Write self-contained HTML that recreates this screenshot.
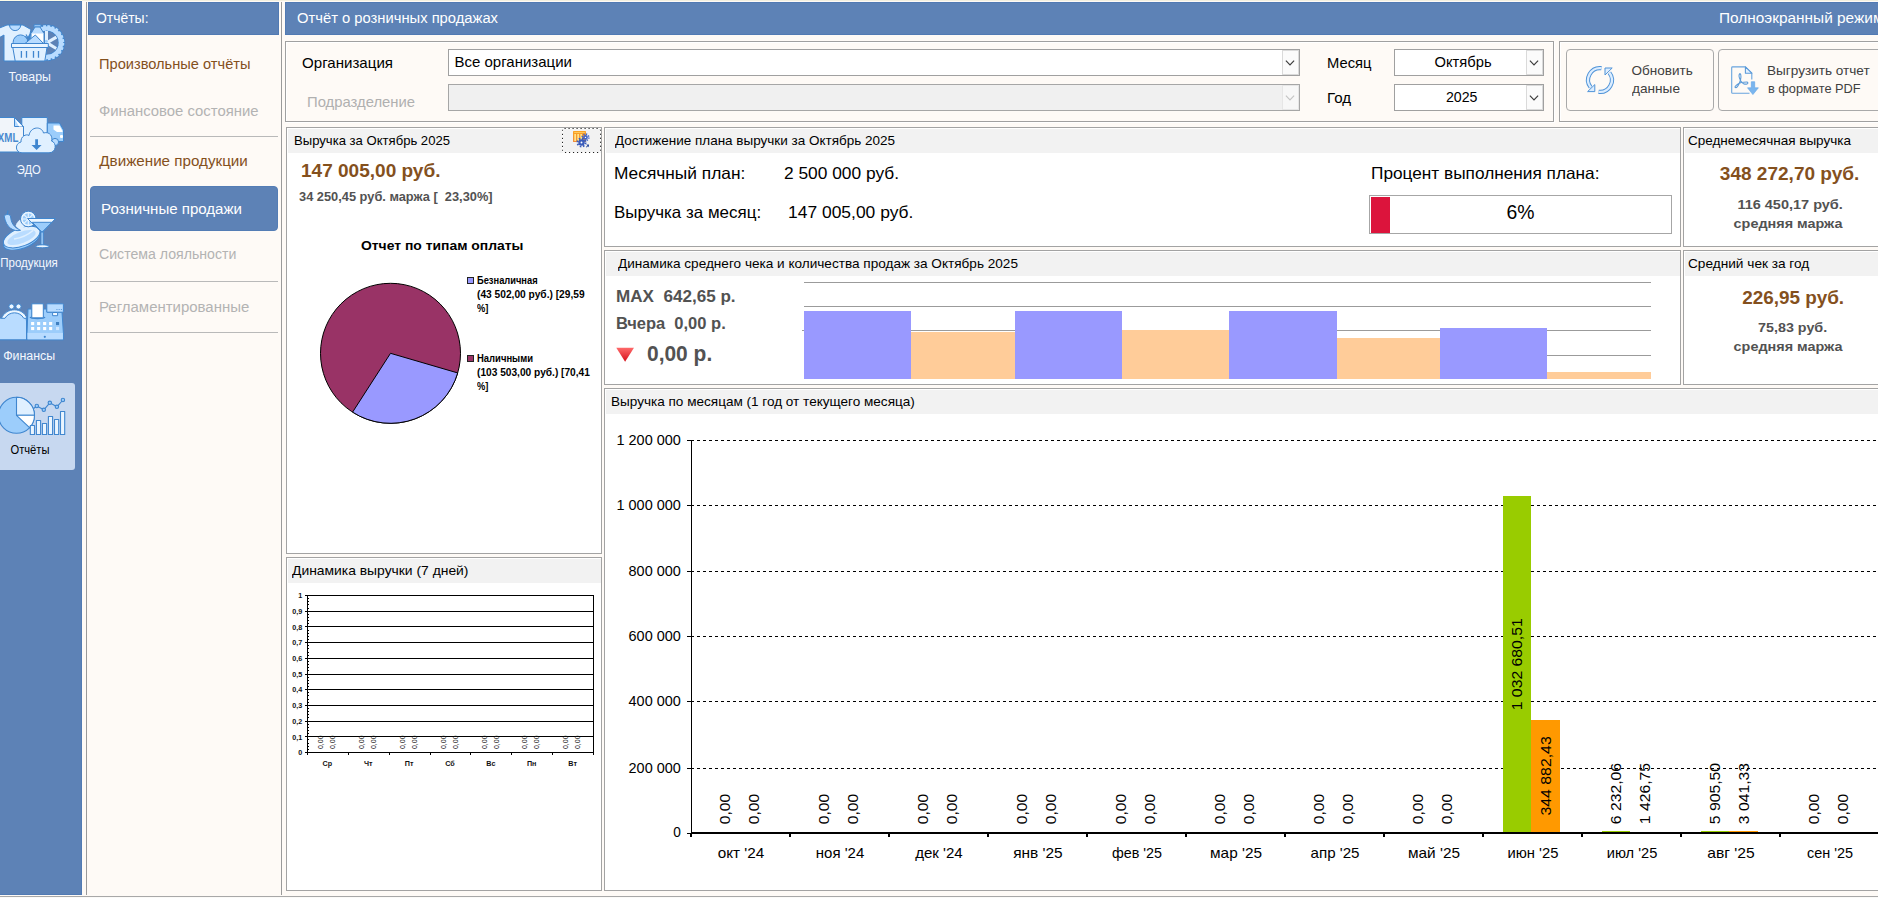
<!DOCTYPE html>
<html lang="ru"><head><meta charset="utf-8"><title>Отчёт о розничных продажах</title>
<style>
html,body{margin:0;padding:0;}
body{width:1878px;height:898px;overflow:hidden;background:#fefaf6;font-family:"Liberation Sans", sans-serif;position:relative;}
div,span,svg{position:absolute;box-sizing:border-box;}
.t{white-space:pre;line-height:normal;}
.panel{border:1px solid #a3a3a3;background:#fff;}
.band{background:#f2f2f2;}
.combo{border:1px solid #a0a0a0;background:#fff;}
.combo.dis{background:#f0f0f0;border-color:#a6a6a6;}
.ddb{border:1px solid #b9b9b9;background:#fff;}
.btn{border:1px solid #a9a9a9;border-radius:4px;background:#fefaf6;}
.hl{height:1px;background:#b4b4b4;}
</style></head><body>
<div style="left:0px;top:0px;width:1878px;height:1px;background:#f2efdf;"></div>
<div style="left:0px;top:0px;width:82px;height:1px;background:#fdfce8;"></div>
<div style="left:0px;top:896px;width:1878px;height:1px;background:#a8a8a8;"></div>
<div style="left:0px;top:897px;width:1878px;height:1px;background:#fbfaf8;"></div>
<div style="left:-1px;top:1px;width:83px;height:894px;background:#5d82b6;border:1px solid #517ab3;"></div>
<div style="left:0px;top:383px;width:75px;height:87px;background:#c7d8f0;border-radius:0 3px 3px 0;"></div>
<span class="t " style="left:9.06px;top:70.00px;font-size:12px;color:#f4f8ff;transform:scaleX(1.0271);transform-origin:50% 0;">Товары</span>
<span class="t " style="left:16.36px;top:163.00px;font-size:12px;color:#f4f8ff;transform:scaleX(0.9343);transform-origin:50% 0;">ЭДО</span>
<span class="t " style="left:-0.72px;top:256.00px;font-size:12px;color:#f4f8ff;transform:scaleX(0.9593);transform-origin:50% 0;">Продукция</span>
<span class="t " style="left:4.30px;top:349.00px;font-size:12px;color:#f4f8ff;transform:scaleX(1.0319);transform-origin:50% 0;">Финансы</span>
<span class="t " style="left:8.65px;top:443.00px;font-size:12px;color:#000;transform:scaleX(0.9310);transform-origin:50% 0;">Отчёты</span>
<svg style="left:0px;top:22px" width="68" height="42" viewBox="0 22 68 42" ><g stroke="#3f86cf" stroke-width="1" stroke-linejoin="round"><circle cx="46.7" cy="42.7" r="14.9" fill="none" stroke="#3f86cf" stroke-width="7" stroke-dasharray="2.9 1.0"/><circle cx="46.7" cy="42.7" r="14.6" fill="none" stroke="#3f86cf" stroke-width="6.4"/><circle cx="46.7" cy="42.7" r="14.9" fill="none" stroke="#b9dcff" stroke-width="5.4" stroke-dasharray="2.5 1.4" stroke-dashoffset="-0.2"/><circle cx="46.7" cy="42.7" r="14.3" fill="none" stroke="#b9dcff" stroke-width="4.4"/><path d="M45 31 H48 V40.3 L55.6 35.8 L57.2 38.4 L50 42.8 L57 47.2 L55.5 49.8 L47.5 45 L45 45 Z" fill="#e0f0ff" stroke="none"/><circle cx="46.3" cy="41.3" r="1.6" fill="#9ccdfb" stroke="none"/><path d="M-3 29 L7 25 H23 L31 29.5 L29 38 L25 36.5 V61 H4 V35 L-3 39 Z" fill="#e0f0ff"/><path d="M9.5 25 A5.6 5.6 0 0 0 20.7 25 Z" fill="#b9dcff"/><path d="M34 24.8 H41 V27 H34 Z" fill="#b9dcff"/><path d="M35 27 H40 L44 33.5 V44 H31 V33.5 Z" fill="#b9dcff"/><path d="M31 33.5 H44 V44 H31 Z" fill="#fff" stroke="none"/><path d="M31 33.5 V44 M44 33.5 V44" fill="none"/><circle cx="20.5" cy="42.3" r="7.4" fill="#9ccdfb"/><path d="M26 34.5 L28 38 L29.5 35 L29 40" fill="none" stroke-width="1.2"/><path d="M25 43.5 L35.3 35 L43.5 43.5 Z" fill="#b9dcff"/><path d="M12.8 47.5 H47 L44.8 61 H15.2 Z" fill="#e0f0ff"/><rect x="11.5" y="43.5" width="36.8" height="4" fill="#eaf5ff"/><path d="M21.4 51 V57.7 M26.5 51 V57.7 M33.5 51 V57.7 M38.5 51 V57.7" fill="none" stroke-width="1.3"/></g></svg><svg style="left:0px;top:115px" width="68" height="42" viewBox="0 115 68 42" ><g stroke="#3f86cf" stroke-width="1" stroke-linejoin="round"><rect x="21.8" y="117.5" width="25.5" height="20" fill="#e0f0ff"/><path d="M47.3 123 H59.5 L63.5 130 V141.5 H47.3 Z" fill="#9ccdfb"/><path d="M53.5 125.5 H59.5 L62.5 131 V132 H57 L53.5 129.5 Z" fill="#fff" stroke="none"/><rect x="60" y="135" width="3" height="3" rx="1" fill="#fff" stroke="none"/><circle cx="55" cy="142" r="3.6" fill="#b9dcff"/><path d="M-3 117.5 H14.5 L23.5 126.5 V152 H-3 Z" fill="#f1f5fa"/><path d="M14.5 117.5 V126.5 H23.5 Z" fill="#b9dcff"/><path d="M14.5 118.5 L22.5 126.5 H19 Z" fill="#fff" stroke="none"/><path d="M22 152.8 C15 152.8 14.5 143.5 21 142 C20.5 136.5 26 133.5 29 135.5 C30.5 126 42 126 43.5 133 C50 131 53 137 51.5 141 C57 142.5 56.5 152.8 49 152.8 Z" fill="#e0f0ff"/></g><path d="M35.2 139.2 H38 V145 H41.6 L36.6 150 L31.5 145 H35.2 Z" fill="#3f86cf"/><text x="-2.2" y="141.7" font-family='"Liberation Sans", sans-serif' font-size="12.6" font-weight="700" fill="#4a8ad0" textLength="20.6" lengthAdjust="spacingAndGlyphs">XML</text></svg><svg style="left:0px;top:208px" width="68" height="42" viewBox="0 208 68 42" ><g stroke="#3f86cf" stroke-width="1" stroke-linejoin="round"><ellipse cx="21.7" cy="239.3" rx="19.3" ry="9" transform="rotate(-21 21.7 239.3)" fill="#9ccdfb"/><ellipse cx="21.7" cy="237" rx="19.3" ry="9" transform="rotate(-21 21.7 237)" fill="#e0f0ff"/><ellipse cx="21.5" cy="237.6" rx="15" ry="5.6" transform="rotate(-21 21.5 237.6)" fill="#b9dcff" stroke="none"/><path d="M14 239 C21 238 29 234 33 230.5" fill="none" stroke="#e0f0ff" stroke-width="1.6"/><path d="M15.5 226 C17 222 19 220 21 219 L25 226 L21 231 Z" fill="#e0f0ff" stroke="none"/><path d="M4.2 216 C5.5 214 9.5 214 10.5 216 C11 223 14 227.5 20.5 230.3 C14 232 6 228 4.2 216 Z" fill="#b9dcff"/><path d="M7.2 214.5 L8 210.5" fill="none" stroke-width="1.3"/><circle cx="28.3" cy="219" r="7.8" fill="#e9f5ff"/><circle cx="28.3" cy="219" r="5.7" fill="#9ccdfb" stroke="none"/><path d="M28.3 213 V225 M22.5 219 H34 M24.2 214.9 L32.4 223.1 M32.4 214.9 L24.2 223.1" fill="none" stroke="#e9f5ff" stroke-width="1.1"/><path d="M27.5 218.5 H55.5 L42.8 232 H41.3 Z" fill="#eef7ff"/><path d="M32.3 222.3 H51.8 L42.6 231.6 H41.5 Z" fill="#9ccdfb"/><rect x="41" y="232" width="2.2" height="13" fill="#b9dcff"/><ellipse cx="42.3" cy="246.3" rx="6.8" ry="1.5" fill="#eef7ff"/></g></svg><svg style="left:0px;top:301px" width="68" height="42" viewBox="0 301 68 42" ><g stroke="#3f86cf" stroke-width="1" stroke-linejoin="round"><path d="M-3 321 C-3 319 0 318 2.5 318 C6.5 308 22.5 308 26 318 L26.5 321 V339.8 H-3 Z" fill="#b9dcff"/><path d="M1.5 318.3 C6 307 23 307 27 318.3 L23.8 318.3 C20 311 9 311 5 318.3 Z" fill="#eef7ff"/><circle cx="11.5" cy="306.5" r="2.6" fill="#eef7ff"/><circle cx="18.5" cy="306.5" r="2.6" fill="#eef7ff"/><path d="M28 309 H32 V317 H43 V309 H46.8 V312.2 H62 L63.4 332.8 V339.8 H27 V332.8 Z" fill="#9ccdfb"/><rect x="27.5" y="333" width="35.4" height="6.3" fill="#b9dcff" stroke="none"/><ellipse cx="37.5" cy="317.6" rx="8" ry="1.6" fill="#3f86cf" stroke="none"/><rect x="31.8" y="303.8" width="11.5" height="14" fill="#fff"/><rect x="46.8" y="303.8" width="16.6" height="8.4" rx="0.8" fill="#b9dcff"/><rect x="52.6" y="312.5" width="5" height="3.2" fill="#f4faff"/></g><rect x="31.1" y="322" width="3.1" height="3.1" fill="#fff"/><rect x="31.1" y="327" width="3.1" height="3.1" fill="#fff"/><rect x="37.1" y="322" width="3.1" height="3.1" fill="#fff"/><rect x="37.1" y="327" width="3.1" height="3.1" fill="#fff"/><rect x="43.1" y="322" width="3.1" height="3.1" fill="#fff"/><rect x="43.1" y="327" width="3.1" height="3.1" fill="#fff"/><rect x="49.1" y="322" width="3.1" height="3.1" fill="#fff"/><rect x="49.1" y="327" width="3.1" height="3.1" fill="#fff"/><rect x="56" y="322" width="3.1" height="3.1" fill="#3f7fc0"/><rect x="56" y="327" width="3.1" height="3.1" fill="#cfe6ff"/><circle cx="44.8" cy="336.8" r="1.1" fill="#3f86cf"/><path d="M56.5 309.5 h0.9 m1.3 0 h0.9 m1.3 0 h0.9" stroke="#3f86cf" stroke-width="0.9" fill="none"/></svg><svg style="left:0px;top:394px" width="68" height="44" viewBox="0 394 68 44" ><g stroke="#3f86cf" stroke-width="1.1" stroke-linejoin="round"><circle cx="16.5" cy="415.3" r="18" fill="#9ccdfb"/><path d="M16.5 415.3 V397.3 A18 18 0 0 1 34.5 415.3 Z" fill="#e0f0ff"/><path d="M16.5 415.3 H34.5 A18 18 0 0 1 29.56 427.69 Z" fill="#fff"/><rect x="30.3" y="425.5" width="4.2" height="9.0" fill="#eaf5ff"/><rect x="36.4" y="420.5" width="4.2" height="14.0" fill="#eaf5ff"/><rect x="42.4" y="423.5" width="4.2" height="11.0" fill="#eaf5ff"/><rect x="48.4" y="416.5" width="4.2" height="18.0" fill="#eaf5ff"/><rect x="54.5" y="419.5" width="4.2" height="15.0" fill="#eaf5ff"/><rect x="60.5" y="411.5" width="4.2" height="23.0" fill="#eaf5ff"/><path d="M33.6 408.5 L36.8 406 L43.8 409.8 L49.8 402.8 L56.9 406.8 L62.9 400" fill="none"/><circle cx="36.8" cy="406" r="1.7" fill="#9ccdfb"/><circle cx="43.8" cy="409.8" r="1.7" fill="#9ccdfb"/><circle cx="49.8" cy="402.8" r="1.7" fill="#9ccdfb"/><circle cx="56.9" cy="406.8" r="1.7" fill="#9ccdfb"/><circle cx="62.9" cy="400" r="1.7" fill="#9ccdfb"/></g></svg>
<div style="left:86px;top:2px;width:1px;height:893px;background:#9a9a9a;"></div>
<div style="left:281px;top:2px;width:1px;height:893px;background:#9a9a9a;"></div>
<div style="left:88px;top:2px;width:191px;height:33px;background:#5d82b6;border:1px solid #517ab3;"></div>
<span class="t " style="left:96.30px;top:9.70px;font-size:14.67px;color:#fff;transform:scaleX(0.9508);transform-origin:0 0;">Отчёты:</span>
<span class="t " style="left:99.30px;top:55.00px;font-size:15.2px;color:#84501d;transform:scaleX(0.9631);transform-origin:0 0;">Произвольные отчёты</span>
<span class="t " style="left:99.30px;top:101.50px;font-size:15.2px;color:#b3b3b3;transform:scaleX(0.9782);transform-origin:0 0;">Финансовое состояние</span>
<span class="t " style="left:99.30px;top:152.30px;font-size:15.2px;color:#84501d;">Движение продукции</span>
<span class="t " style="left:99.30px;top:245.20px;font-size:15.2px;color:#b3b3b3;transform:scaleX(0.9294);transform-origin:0 0;">Система лояльности</span>
<span class="t " style="left:99.30px;top:297.70px;font-size:15.2px;color:#b3b3b3;transform:scaleX(0.9855);transform-origin:0 0;">Регламентированные</span>
<div style="left:90px;top:186px;width:188px;height:45px;background:#5d82b6;border-radius:4px;border:1px solid #547db5;"></div>
<span class="t " style="left:100.60px;top:199.70px;font-size:15.2px;color:#fff;transform:scaleX(0.9915);transform-origin:0 0;">Розничные продажи</span>
<div style="left:90px;top:136px;width:188px;height:1px;background:#b9b9b9;"></div>
<div style="left:90px;top:281px;width:188px;height:1px;background:#b9b9b9;"></div>
<div style="left:90px;top:332px;width:188px;height:1px;background:#b9b9b9;"></div>
<div style="left:285px;top:2px;width:1600px;height:33px;background:#5d82b6;border:1px solid #517ab3;"></div>
<span class="t " style="left:297.00px;top:9.70px;font-size:14.67px;color:#fff;transform:scaleX(1.0069);transform-origin:0 0;">Отчёт о розничных продажах</span>
<span class="t " style="left:1719.40px;top:8.70px;font-size:15.2px;color:#fff;transform:scaleX(1.0141);transform-origin:0 0;">Полноэкранный режим</span>
<div style="left:286px;top:42px;width:1269px;height:81px;border:1px solid #fff;"></div>
<div style="left:285px;top:41px;width:1269px;height:81px;border:1px solid #a0a0a0;"></div>
<div style="left:1560px;top:42px;width:330px;height:81px;border:1px solid #fff;"></div>
<div style="left:1559px;top:41px;width:330px;height:81px;border:1px solid #a0a0a0;"></div>
<span class="t " style="left:302.40px;top:54.00px;font-size:15px;color:#000;transform:scaleX(1.0059);transform-origin:0 0;">Организация</span>
<span class="t " style="left:306.50px;top:93.00px;font-size:15px;color:#b0b0b0;transform:scaleX(0.9880);transform-origin:0 0;">Подразделение</span>
<span class="t " style="left:1326.60px;top:54.00px;font-size:15px;color:#000;transform:scaleX(0.9838);transform-origin:0 0;">Месяц</span>
<span class="t " style="left:1326.60px;top:88.80px;font-size:15px;color:#000;transform:scaleX(1.0046);transform-origin:0 0;">Год</span>
<div class="combo" style="left:448px;top:49px;width:852px;height:27px;"></div><div style="left:1282px;top:50px;width:17px;height:25px;border:1px solid #dadada;background:#fbfbfb;"></div><svg style="left:1282px;top:49px" width="17" height="27" viewBox="0 0 17 27"><path d="M3.9 11.7 L8 16.0 L12.1 11.7" fill="none" stroke="#3c3c3c" stroke-width="1.15"/></svg>
<span class="t " style="left:454.50px;top:53.00px;font-size:15px;color:#000;">Все организации</span>
<div class="combo dis" style="left:448px;top:84px;width:852px;height:27px;"></div><div style="left:1282px;top:85px;width:17px;height:25px;border:1px solid #e6e6e6;background:#f7f7f7;"></div><svg style="left:1282px;top:84px" width="17" height="27" viewBox="0 0 17 27"><path d="M3.9 11.7 L8 16.0 L12.1 11.7" fill="none" stroke="#c4c4c4" stroke-width="1.15"/></svg>
<div class="combo" style="left:1394px;top:49px;width:150px;height:27px;"></div><div style="left:1526px;top:50px;width:17px;height:25px;border:1px solid #dadada;background:#fbfbfb;"></div><svg style="left:1526px;top:49px" width="17" height="27" viewBox="0 0 17 27"><path d="M3.9 11.7 L8 16.0 L12.1 11.7" fill="none" stroke="#3c3c3c" stroke-width="1.15"/></svg>
<span class="t " style="left:1433.63px;top:53.00px;font-size:15px;color:#000;transform:scaleX(0.9804);transform-origin:50% 0;">Октябрь</span>
<div class="combo" style="left:1394px;top:84px;width:150px;height:27px;"></div><div style="left:1526px;top:85px;width:17px;height:25px;border:1px solid #dadada;background:#fbfbfb;"></div><svg style="left:1526px;top:84px" width="17" height="27" viewBox="0 0 17 27"><path d="M3.9 11.7 L8 16.0 L12.1 11.7" fill="none" stroke="#3c3c3c" stroke-width="1.15"/></svg>
<span class="t " style="left:1445.31px;top:88.00px;font-size:15px;color:#000;transform:scaleX(0.9438);transform-origin:50% 0;">2025</span>
<div class="btn" style="left:1566px;top:49px;width:148px;height:62px;"></div>
<div class="btn" style="left:1718px;top:49px;width:170px;height:62px;"></div>
<span class="t " style="left:1631.60px;top:62.80px;font-size:13.5px;color:#404040;">Обновить</span>
<span class="t " style="left:1632.00px;top:80.80px;font-size:13.5px;color:#404040;transform:scaleX(1.0102);transform-origin:0 0;">данные</span>
<span class="t " style="left:1766.60px;top:62.80px;font-size:13.5px;color:#404040;transform:scaleX(1.0048);transform-origin:0 0;">Выгрузить отчет</span>
<span class="t " style="left:1768.30px;top:80.80px;font-size:13.5px;color:#404040;transform:scaleX(0.9464);transform-origin:0 0;">в формате PDF</span>
<svg style="left:1582px;top:62px" width="36" height="36" viewBox="1582 62 36 36" ><path d="M1601.45 68.19 A11.9 11.9 0 0 0 1590.62 87.33" fill="none" stroke="#4f93d8" stroke-width="4.2"/><path d="M1598.55 91.81 A11.9 11.9 0 0 0 1609.38 72.67" fill="none" stroke="#4f93d8" stroke-width="4.2"/><path d="M1587.6 91.6 L1594.8 84.6 V91.6 Z" fill="#dcedff" stroke="#4f93d8" stroke-width="1"/><path d="M1605 68 H1612.2 L1605 75 Z" fill="#dcedff" stroke="#4f93d8" stroke-width="1"/><path d="M1601.45 68.19 A11.9 11.9 0 0 0 1590.62 87.33" fill="none" stroke="#dcedff" stroke-width="2.3"/><path d="M1598.55 91.81 A11.9 11.9 0 0 0 1609.38 72.67" fill="none" stroke="#dcedff" stroke-width="2.3"/></svg><svg style="left:1728px;top:62px" width="34" height="36" viewBox="1728 62 34 36" ><path d="M1745.4 66.9 H1732.5 Q1731.7 66.9 1731.7 67.7 V92.4 Q1731.7 93.2 1732.5 93.2 H1749.5 M1745.4 66.9 L1751.8 73.2 V79.5" fill="none" stroke="#68a4de" stroke-width="1.1" stroke-linejoin="round"/><path d="M1745.4 66.9 V73.2 H1751.8 Z" fill="#e3f0ff" stroke="#5c9bd9" stroke-width="1.1" stroke-linejoin="round"/><path d="M1751.3 81.7 H1754.7 V87.8 H1758.4 L1752.9 94.6 L1747.5 87.8 H1751.3 Z" fill="#7ab5ee" stroke="#5fa3e6" stroke-width="0.6"/><path d="M1740 73.5 C1738.6 74.5 1739.2 78 1740.6 80.8 C1742 83.5 1745 84.6 1747 84 C1748.3 83.5 1748.2 82 1746.6 82 C1744 82 1739.5 82.8 1737.6 84.2 C1735.6 85.6 1734.4 87.2 1735.4 87.6 C1736.6 88 1738.6 85 1739.8 82 C1741 79 1741.6 74.5 1740 73.5 Z" fill="none" stroke="#5c9bd9" stroke-width="1.1" stroke-linejoin="round"/></svg>
<div class="panel" style="left:286px;top:127px;width:316px;height:427px;"></div><div class="band" style="left:288px;top:129px;width:313px;height:24px;"></div>
<span class="t " style="left:293.50px;top:132.70px;font-size:12.8px;color:#000;transform:scaleX(1.0230);transform-origin:0 0;">Выручка за Октябрь 2025</span>
<svg style="left:561px;top:127px" width="41" height="27" viewBox="561 127 41 27"><rect x="562.5" y="128.5" width="38" height="24" rx="2" fill="none" stroke="#fff" stroke-width="1"/><rect x="562.5" y="128.5" width="38" height="24" rx="2" fill="none" stroke="#222" stroke-width="1" stroke-dasharray="1.2 2.8"/></svg>
<svg style="left:570px;top:129px" width="24" height="22" viewBox="570 129 24 22" ><defs><linearGradient id="og" x1="0" y1="0" x2="0" y2="1"><stop offset="0" stop-color="#fba421"/><stop offset="1" stop-color="#f08a3a"/></linearGradient></defs><rect x="573" y="131" width="13" height="11" rx="0.6" fill="url(#og)"/><rect x="574.2" y="132.2" width="10.6" height="0.8" fill="#ffd56b"/><rect x="574.3" y="134" width="1.7" height="7" fill="#ffe48a"/><rect x="577.3" y="134" width="1.7" height="7" fill="#ffe48a"/><rect x="580.3" y="134" width="1.7" height="7" fill="#ffe48a"/><circle cx="585.5" cy="137.4" r="2.3" fill="#4468c8"/><circle cx="585.5" cy="137.4" r="3.1999999999999997" fill="none" stroke="#4468c8" stroke-width="1.8" stroke-dasharray="1.257 1.257"/><circle cx="585.5" cy="137.4" r="0.69" fill="#fff"/><circle cx="581.5" cy="142.5" r="3.2" fill="#3a5cbb"/><circle cx="581.5" cy="142.5" r="4.1000000000000005" fill="none" stroke="#3a5cbb" stroke-width="1.8" stroke-dasharray="1.610 1.610"/><circle cx="581.5" cy="142.5" r="0.96" fill="#fff"/><path d="M586.2 144.4 H589 V147.2 L588 146.2 L586.6 147.6 L585.9 146.9 L587.3 145.5 Z" fill="#2f4f9f"/></svg>
<span class="t " style="left:300.80px;top:161.00px;font-size:17.9px;color:#84501d;font-weight:700;transform:scaleX(1.0634);transform-origin:0 0;">147 005,00 руб.</span>
<span class="t " style="left:298.60px;top:190.00px;font-size:12.6px;color:#525252;font-weight:700;transform:scaleX(1.0179);transform-origin:0 0;">34 250,45 руб. маржа [  23,30%]</span>
<span class="t " style="left:361.40px;top:237.70px;font-size:13.5px;color:#000;font-weight:700;transform:scaleX(1.0296);transform-origin:0 0;">Отчет по типам оплаты</span>
<div style="left:467px;top:277px;width:7px;height:7px;background:#9999ff;border:1px solid #222;"></div>
<div style="left:467px;top:355px;width:7px;height:7px;background:#993366;border:1px solid #222;"></div>
<span class="t " style="left:477.20px;top:275.00px;font-size:10px;color:#000;font-weight:700;transform:scaleX(0.9312);transform-origin:0 0;">Безналичная</span>
<span class="t " style="left:477.20px;top:289.20px;font-size:10px;color:#000;font-weight:700;transform:scaleX(1.0193);transform-origin:0 0;">(43 502,00 руб.) [29,59</span>
<span class="t " style="left:477.20px;top:302.80px;font-size:10px;color:#000;font-weight:700;transform:scaleX(0.9318);transform-origin:0 0;">%]</span>
<span class="t " style="left:477.20px;top:353.00px;font-size:10px;color:#000;font-weight:700;transform:scaleX(0.9456);transform-origin:0 0;">Наличными</span>
<span class="t " style="left:477.20px;top:367.20px;font-size:10px;color:#000;font-weight:700;transform:scaleX(1.0160);transform-origin:0 0;">(103 503,00 руб.) [70,41</span>
<span class="t " style="left:477.20px;top:381.00px;font-size:10px;color:#000;font-weight:700;transform:scaleX(0.9318);transform-origin:0 0;">%]</span>
<div class="panel" style="left:286px;top:557px;width:316px;height:334px;"></div><div class="band" style="left:288px;top:559px;width:313px;height:24px;"></div>
<span class="t " style="left:292.00px;top:563.00px;font-size:12.8px;color:#000;transform:scaleX(1.0839);transform-origin:0 0;">Динамика выручки (7 дней)</span>
<div class="panel" style="left:604px;top:127px;width:1077px;height:120px;"></div><div class="band" style="left:606px;top:129px;width:1074px;height:24px;"></div>
<span class="t " style="left:615.40px;top:132.70px;font-size:12.8px;color:#000;transform:scaleX(1.0540);transform-origin:0 0;">Достижение плана выручки за Октябрь 2025</span>
<span class="t " style="left:613.60px;top:163.90px;font-size:16.5px;color:#000;transform:scaleX(1.0495);transform-origin:0 0;">Месячный план:</span>
<span class="t " style="left:783.50px;top:163.90px;font-size:16.5px;color:#000;transform:scaleX(1.0507);transform-origin:0 0;">2 500 000 руб.</span>
<span class="t " style="left:613.60px;top:202.80px;font-size:16.5px;color:#000;transform:scaleX(1.0278);transform-origin:0 0;">Выручка за месяц:</span>
<span class="t " style="left:788.00px;top:202.80px;font-size:16.5px;color:#000;transform:scaleX(1.0570);transform-origin:0 0;">147 005,00 руб.</span>
<span class="t " style="left:1370.50px;top:163.90px;font-size:16.5px;color:#000;transform:scaleX(1.0449);transform-origin:0 0;">Процент выполнения плана:</span>
<div style="left:1369px;top:195px;width:303px;height:39px;border:1px solid #a6a6a6;background:#fff;"></div>
<div style="left:1371px;top:197px;width:19px;height:36px;background:#dc143c;"></div>
<span class="t " style="left:1506.15px;top:200.70px;font-size:20px;color:#000;transform:scaleX(0.9686);transform-origin:50% 0;">6%</span>
<div class="panel" style="left:1683px;top:127px;width:200px;height:120px;"></div><div class="band" style="left:1685px;top:129px;width:197px;height:24px;"></div>
<span class="t " style="left:1688.10px;top:132.90px;font-size:12.8px;color:#000;transform:scaleX(1.0552);transform-origin:0 0;">Среднемесячная выручка</span>
<span class="t " style="left:1724.21px;top:164.30px;font-size:17.9px;color:#84501d;font-weight:700;transform:scaleX(1.0641);transform-origin:50% 0;">348 272,70 руб.</span>
<span class="t " style="left:1740.88px;top:196.60px;font-size:13.5px;color:#525252;font-weight:700;transform:scaleX(1.0728);transform-origin:50% 0;">116 450,17 руб.</span>
<span class="t " style="left:1736.84px;top:215.80px;font-size:13.5px;color:#525252;font-weight:700;transform:scaleX(1.0663);transform-origin:50% 0;">средняя маржа</span>
<div class="panel" style="left:604px;top:250px;width:1077px;height:135px;"></div><div class="band" style="left:606px;top:252px;width:1074px;height:24px;"></div>
<span class="t " style="left:618.10px;top:256.00px;font-size:12.8px;color:#000;transform:scaleX(1.0612);transform-origin:0 0;">Динамика среднего чека и количества продаж за Октябрь 2025</span>
<span class="t " style="left:615.90px;top:286.70px;font-size:16.5px;color:#525252;font-weight:700;transform:scaleX(1.0349);transform-origin:0 0;">MAX  642,65 р.</span>
<span class="t " style="left:615.90px;top:313.70px;font-size:16.5px;color:#525252;font-weight:700;">Вчера  0,00 р.</span>
<span class="t " style="left:647.40px;top:342.00px;font-size:21.3px;color:#525252;font-weight:700;transform:scaleX(0.9835);transform-origin:0 0;">0,00 р.</span>
<svg style="left:614px;top:345px" width="24" height="20" viewBox="0 0 24 20"><defs><linearGradient id="rg" x1="0" y1="0" x2="0" y2="1"><stop offset="0" stop-color="#ff6a6a"/><stop offset="1" stop-color="#d40f1a"/></linearGradient></defs><path d="M2.3 2.7 L20 2.7 L11.1 16.7 Z" fill="url(#rg)"/></svg>
<div class="panel" style="left:1683px;top:250px;width:200px;height:135px;"></div><div class="band" style="left:1685px;top:252px;width:197px;height:24px;"></div>
<span class="t " style="left:1688.00px;top:255.70px;font-size:12.8px;color:#000;transform:scaleX(1.0664);transform-origin:0 0;">Средний чек за год</span>
<span class="t " style="left:1744.82px;top:287.90px;font-size:17.9px;color:#84501d;font-weight:700;transform:scaleX(1.0565);transform-origin:50% 0;">226,95 руб.</span>
<span class="t " style="left:1759.60px;top:320.20px;font-size:13.5px;color:#525252;font-weight:700;transform:scaleX(1.0598);transform-origin:50% 0;">75,83 руб.</span>
<span class="t " style="left:1736.84px;top:338.80px;font-size:13.5px;color:#525252;font-weight:700;transform:scaleX(1.0663);transform-origin:50% 0;">средняя маржа</span>
<div class="panel" style="left:604px;top:388px;width:1290px;height:503px;"></div><div class="band" style="left:606px;top:390px;width:1287px;height:24px;"></div>
<span class="t " style="left:610.50px;top:394.40px;font-size:12.8px;color:#000;transform:scaleX(1.0589);transform-origin:0 0;">Выручка по месяцам (1 год от текущего месяца)</span>
<svg style="left:310px;top:270px" width="160" height="165" viewBox="310 270 160 165" font-family='"Liberation Sans", sans-serif'><circle cx="390.5" cy="353.3" r="70" fill="#993366" stroke="#000" stroke-width="1"/><path d="M390.5 353.3 L457.69 372.95 A70 70 0 0 1 352.58 412.14 Z" fill="#9999ff" stroke="#000" stroke-width="1" stroke-linejoin="round"/></svg>
<svg style="left:288px;top:585px" width="316" height="190" viewBox="288 585 316 190" font-family='"Liberation Sans", sans-serif'><g shape-rendering="crispEdges" stroke="#000" stroke-width="1" fill="none"><rect x="307.5" y="595.5" width="286" height="157"/><path d="M305 595.5 H594"/><path d="M305 611.5 H594"/><path d="M305 626.5 H594"/><path d="M305 642.5 H594"/><path d="M305 658.5 H594"/><path d="M305 674.5 H594"/><path d="M305 689.5 H594"/><path d="M305 705.5 H594"/><path d="M305 721.5 H594"/><path d="M305 736.5 H594"/><path d="M305 752.5 H594"/><path d="M307 595.5 H309"/><path d="M307 598.5 H309"/><path d="M307 601.5 H309"/><path d="M307 604.5 H309"/><path d="M307 608.5 H309"/><path d="M307 611.5 H309"/><path d="M307 614.5 H309"/><path d="M307 617.5 H309"/><path d="M307 620.5 H309"/><path d="M307 623.5 H309"/><path d="M307 626.5 H309"/><path d="M307 630.5 H309"/><path d="M307 633.5 H309"/><path d="M307 636.5 H309"/><path d="M307 639.5 H309"/><path d="M307 642.5 H309"/><path d="M307 645.5 H309"/><path d="M307 648.5 H309"/><path d="M307 652.5 H309"/><path d="M307 655.5 H309"/><path d="M307 658.5 H309"/><path d="M307 661.5 H309"/><path d="M307 664.5 H309"/><path d="M307 667.5 H309"/><path d="M307 670.5 H309"/><path d="M307 674.5 H309"/><path d="M307 677.5 H309"/><path d="M307 680.5 H309"/><path d="M307 683.5 H309"/><path d="M307 686.5 H309"/><path d="M307 689.5 H309"/><path d="M307 692.5 H309"/><path d="M307 695.5 H309"/><path d="M307 699.5 H309"/><path d="M307 702.5 H309"/><path d="M307 705.5 H309"/><path d="M307 708.5 H309"/><path d="M307 711.5 H309"/><path d="M307 714.5 H309"/><path d="M307 717.5 H309"/><path d="M307 721.5 H309"/><path d="M307 724.5 H309"/><path d="M307 727.5 H309"/><path d="M307 730.5 H309"/><path d="M307 733.5 H309"/><path d="M307 736.5 H309"/><path d="M307 739.5 H309"/><path d="M307 743.5 H309"/><path d="M307 746.5 H309"/><path d="M307 749.5 H309"/><path d="M307.5 752 V755"/><path d="M348.5 752 V755"/><path d="M389.5 752 V755"/><path d="M430.5 752 V755"/><path d="M470.5 752 V755"/><path d="M511.5 752 V755"/><path d="M552.5 752 V755"/><path d="M593.5 752 V755"/></g><text x="302.3" y="598.2" font-size="7.2" font-weight="700" text-anchor="end" fill="#111">1</text><text x="302.3" y="613.9" font-size="7.2" font-weight="700" text-anchor="end" fill="#111">0,9</text><text x="302.3" y="629.6" font-size="7.2" font-weight="700" text-anchor="end" fill="#111">0,8</text><text x="302.3" y="645.3" font-size="7.2" font-weight="700" text-anchor="end" fill="#111">0,7</text><text x="302.3" y="661.0" font-size="7.2" font-weight="700" text-anchor="end" fill="#111">0,6</text><text x="302.3" y="676.7" font-size="7.2" font-weight="700" text-anchor="end" fill="#111">0,5</text><text x="302.3" y="692.4" font-size="7.2" font-weight="700" text-anchor="end" fill="#111">0,4</text><text x="302.3" y="708.1" font-size="7.2" font-weight="700" text-anchor="end" fill="#111">0,3</text><text x="302.3" y="723.8" font-size="7.2" font-weight="700" text-anchor="end" fill="#111">0,2</text><text x="302.3" y="739.5" font-size="7.2" font-weight="700" text-anchor="end" fill="#111">0,1</text><text x="302.3" y="755.2" font-size="7.2" font-weight="700" text-anchor="end" fill="#111">0</text><text x="327.4" y="766" font-size="7.2" font-weight="700" text-anchor="middle" fill="#111">Ср</text><text transform="translate(323.0 749) rotate(-90)" font-size="7" fill="#111" textLength="13.5" lengthAdjust="spacingAndGlyphs">0,00</text><text transform="translate(335.0 749) rotate(-90)" font-size="7" fill="#111" textLength="13.5" lengthAdjust="spacingAndGlyphs">0,00</text><text x="368.3" y="766" font-size="7.2" font-weight="700" text-anchor="middle" fill="#111">Чт</text><text transform="translate(363.9 749) rotate(-90)" font-size="7" fill="#111" textLength="13.5" lengthAdjust="spacingAndGlyphs">0,00</text><text transform="translate(375.9 749) rotate(-90)" font-size="7" fill="#111" textLength="13.5" lengthAdjust="spacingAndGlyphs">0,00</text><text x="409.1" y="766" font-size="7.2" font-weight="700" text-anchor="middle" fill="#111">Пт</text><text transform="translate(404.7 749) rotate(-90)" font-size="7" fill="#111" textLength="13.5" lengthAdjust="spacingAndGlyphs">0,00</text><text transform="translate(416.7 749) rotate(-90)" font-size="7" fill="#111" textLength="13.5" lengthAdjust="spacingAndGlyphs">0,00</text><text x="450.0" y="766" font-size="7.2" font-weight="700" text-anchor="middle" fill="#111">Сб</text><text transform="translate(445.6 749) rotate(-90)" font-size="7" fill="#111" textLength="13.5" lengthAdjust="spacingAndGlyphs">0,00</text><text transform="translate(457.6 749) rotate(-90)" font-size="7" fill="#111" textLength="13.5" lengthAdjust="spacingAndGlyphs">0,00</text><text x="490.9" y="766" font-size="7.2" font-weight="700" text-anchor="middle" fill="#111">Вс</text><text transform="translate(486.5 749) rotate(-90)" font-size="7" fill="#111" textLength="13.5" lengthAdjust="spacingAndGlyphs">0,00</text><text transform="translate(498.5 749) rotate(-90)" font-size="7" fill="#111" textLength="13.5" lengthAdjust="spacingAndGlyphs">0,00</text><text x="531.7" y="766" font-size="7.2" font-weight="700" text-anchor="middle" fill="#111">Пн</text><text transform="translate(527.3 749) rotate(-90)" font-size="7" fill="#111" textLength="13.5" lengthAdjust="spacingAndGlyphs">0,00</text><text transform="translate(539.3 749) rotate(-90)" font-size="7" fill="#111" textLength="13.5" lengthAdjust="spacingAndGlyphs">0,00</text><text x="572.6" y="766" font-size="7.2" font-weight="700" text-anchor="middle" fill="#111">Вт</text><text transform="translate(568.2 749) rotate(-90)" font-size="7" fill="#111" textLength="13.5" lengthAdjust="spacingAndGlyphs">0,00</text><text transform="translate(580.2 749) rotate(-90)" font-size="7" fill="#111" textLength="13.5" lengthAdjust="spacingAndGlyphs">0,00</text></svg>
<svg style="left:800px;top:278px" width="860" height="104" viewBox="800 278 860 104" font-family='"Liberation Sans", sans-serif'><g shape-rendering="crispEdges"><rect x="804" y="282" width="847" height="1" fill="#9b9b9b"/><rect x="804" y="306" width="847" height="1" fill="#9b9b9b"/><rect x="804" y="330" width="847" height="1" fill="#9b9b9b"/><rect x="804" y="355" width="847" height="1" fill="#9b9b9b"/><rect x="802" y="330" width="2" height="1" fill="#9b9b9b"/><rect x="804" y="311" width="107" height="68" fill="#9999ff"/><rect x="911" y="332" width="104" height="47" fill="#ffcc99"/><rect x="1015" y="311" width="107" height="68" fill="#9999ff"/><rect x="1122" y="330" width="107" height="49" fill="#ffcc99"/><rect x="1229" y="311" width="108" height="68" fill="#9999ff"/><rect x="1337" y="338" width="103" height="41" fill="#ffcc99"/><rect x="1440" y="328" width="107" height="51" fill="#9999ff"/><rect x="1547" y="372" width="104" height="7" fill="#ffcc99"/></g></svg>
<svg style="left:606px;top:416px" width="1272" height="472" viewBox="606 416 1272 472" font-family='"Liberation Sans", sans-serif'><g shape-rendering="crispEdges" stroke="#000" fill="none"><path d="M687 440.5 H691" stroke-width="1"/><path d="M691 440.5 H1878" stroke-width="1" stroke-dasharray="3 3"/><path d="M687 505.5 H691" stroke-width="1"/><path d="M691 505.5 H1878" stroke-width="1" stroke-dasharray="3 3"/><path d="M687 571.5 H691" stroke-width="1"/><path d="M691 571.5 H1878" stroke-width="1" stroke-dasharray="3 3"/><path d="M687 636.5 H691" stroke-width="1"/><path d="M691 636.5 H1878" stroke-width="1" stroke-dasharray="3 3"/><path d="M687 701.5 H691" stroke-width="1"/><path d="M691 701.5 H1878" stroke-width="1" stroke-dasharray="3 3"/><path d="M687 768.5 H691" stroke-width="1"/><path d="M691 768.5 H1878" stroke-width="1" stroke-dasharray="3 3"/><path d="M691.5 440 V834" stroke-width="1"/><path d="M687 833.5 H691" stroke-width="1"/></g><g shape-rendering="crispEdges"><rect x="1503" y="496" width="28" height="336" fill="#99cc00"/><rect x="1531" y="720" width="29" height="112" fill="#ff9900"/><rect x="1602" y="831" width="28" height="1" fill="#99cc00"/><rect x="1630" y="831.6" width="29" height="0.39999999999997726" fill="#ff9900"/><rect x="1701" y="831" width="28" height="1" fill="#99cc00"/><rect x="1729" y="831" width="29" height="1" fill="#ff9900"/><rect x="691" y="832" width="1187" height="2" fill="#000"/><rect x="690" y="834" width="2" height="3" fill="#000"/><rect x="789" y="834" width="2" height="3" fill="#000"/><rect x="888" y="834" width="2" height="3" fill="#000"/><rect x="987" y="834" width="2" height="3" fill="#000"/><rect x="1086" y="834" width="2" height="3" fill="#000"/><rect x="1185" y="834" width="2" height="3" fill="#000"/><rect x="1284" y="834" width="2" height="3" fill="#000"/><rect x="1383" y="834" width="2" height="3" fill="#000"/><rect x="1482" y="834" width="2" height="3" fill="#000"/><rect x="1581" y="834" width="2" height="3" fill="#000"/><rect x="1680" y="834" width="2" height="3" fill="#000"/><rect x="1779" y="834" width="2" height="3" fill="#000"/><rect x="1878" y="834" width="2" height="3" fill="#000"/></g><text x="616.5" y="445.0" font-size="14.3" textLength="64.3" lengthAdjust="spacingAndGlyphs">1 200 000</text><text x="616.5" y="510.0" font-size="14.3" textLength="64.3" lengthAdjust="spacingAndGlyphs">1 000 000</text><text x="628.6" y="576.0" font-size="14.3" textLength="52.2" lengthAdjust="spacingAndGlyphs">800 000</text><text x="628.6" y="641.0" font-size="14.3" textLength="52.2" lengthAdjust="spacingAndGlyphs">600 000</text><text x="628.6" y="706.0" font-size="14.3" textLength="52.2" lengthAdjust="spacingAndGlyphs">400 000</text><text x="628.6" y="773.0" font-size="14.3" textLength="52.2" lengthAdjust="spacingAndGlyphs">200 000</text><text x="673.2" y="837.4" font-size="14.3" textLength="7.6" lengthAdjust="spacingAndGlyphs">0</text><text x="717.7" y="857.8" font-size="14.3" textLength="46.6" lengthAdjust="spacingAndGlyphs">окт '24</text><text x="815.8" y="857.8" font-size="14.3" textLength="48.5" lengthAdjust="spacingAndGlyphs">ноя '24</text><text x="915.2" y="857.8" font-size="14.3" textLength="47.5" lengthAdjust="spacingAndGlyphs">дек '24</text><text x="1013.2" y="857.8" font-size="14.3" textLength="49.5" lengthAdjust="spacingAndGlyphs">янв '25</text><text x="1112.0" y="857.8" font-size="14.3" textLength="50" lengthAdjust="spacingAndGlyphs">фев '25</text><text x="1210.0" y="857.8" font-size="14.3" textLength="52" lengthAdjust="spacingAndGlyphs">мар '25</text><text x="1310.5" y="857.8" font-size="14.3" textLength="49" lengthAdjust="spacingAndGlyphs">апр '25</text><text x="1408.0" y="857.8" font-size="14.3" textLength="52" lengthAdjust="spacingAndGlyphs">май '25</text><text x="1507.5" y="857.8" font-size="14.3" textLength="50.9" lengthAdjust="spacingAndGlyphs">июн '25</text><text x="1606.8" y="857.8" font-size="14.3" textLength="50.5" lengthAdjust="spacingAndGlyphs">июл '25</text><text x="1707.2" y="857.8" font-size="14.3" textLength="47.5" lengthAdjust="spacingAndGlyphs">авг '25</text><text x="1807.0" y="857.8" font-size="14.3" textLength="46.1" lengthAdjust="spacingAndGlyphs">сен '25</text><text transform="translate(730.3 824.2) rotate(-90)" font-size="14.3" textLength="30.3" lengthAdjust="spacingAndGlyphs">0,00</text><text transform="translate(758.9 824.2) rotate(-90)" font-size="14.3" textLength="30.3" lengthAdjust="spacingAndGlyphs">0,00</text><text transform="translate(829.3 824.2) rotate(-90)" font-size="14.3" textLength="30.3" lengthAdjust="spacingAndGlyphs">0,00</text><text transform="translate(857.9 824.2) rotate(-90)" font-size="14.3" textLength="30.3" lengthAdjust="spacingAndGlyphs">0,00</text><text transform="translate(928.3 824.2) rotate(-90)" font-size="14.3" textLength="30.3" lengthAdjust="spacingAndGlyphs">0,00</text><text transform="translate(956.9 824.2) rotate(-90)" font-size="14.3" textLength="30.3" lengthAdjust="spacingAndGlyphs">0,00</text><text transform="translate(1027.3 824.2) rotate(-90)" font-size="14.3" textLength="30.3" lengthAdjust="spacingAndGlyphs">0,00</text><text transform="translate(1055.9 824.2) rotate(-90)" font-size="14.3" textLength="30.3" lengthAdjust="spacingAndGlyphs">0,00</text><text transform="translate(1126.3 824.2) rotate(-90)" font-size="14.3" textLength="30.3" lengthAdjust="spacingAndGlyphs">0,00</text><text transform="translate(1154.9 824.2) rotate(-90)" font-size="14.3" textLength="30.3" lengthAdjust="spacingAndGlyphs">0,00</text><text transform="translate(1225.3 824.2) rotate(-90)" font-size="14.3" textLength="30.3" lengthAdjust="spacingAndGlyphs">0,00</text><text transform="translate(1253.9 824.2) rotate(-90)" font-size="14.3" textLength="30.3" lengthAdjust="spacingAndGlyphs">0,00</text><text transform="translate(1324.3 824.2) rotate(-90)" font-size="14.3" textLength="30.3" lengthAdjust="spacingAndGlyphs">0,00</text><text transform="translate(1352.9 824.2) rotate(-90)" font-size="14.3" textLength="30.3" lengthAdjust="spacingAndGlyphs">0,00</text><text transform="translate(1423.3 824.2) rotate(-90)" font-size="14.3" textLength="30.3" lengthAdjust="spacingAndGlyphs">0,00</text><text transform="translate(1451.9 824.2) rotate(-90)" font-size="14.3" textLength="30.3" lengthAdjust="spacingAndGlyphs">0,00</text><text transform="translate(1522.3 710.3) rotate(-90)" font-size="14.3" textLength="92.1" lengthAdjust="spacingAndGlyphs">1 032 680,51</text><text transform="translate(1550.9 815.5) rotate(-90)" font-size="14.3" textLength="79.2" lengthAdjust="spacingAndGlyphs">344 882,43</text><text transform="translate(1621.3 824.2) rotate(-90)" font-size="14.3" textLength="61.2" lengthAdjust="spacingAndGlyphs">6 232,06</text><text transform="translate(1649.9 824.2) rotate(-90)" font-size="14.3" textLength="61.2" lengthAdjust="spacingAndGlyphs">1 426,75</text><text transform="translate(1720.3 824.2) rotate(-90)" font-size="14.3" textLength="61.2" lengthAdjust="spacingAndGlyphs">5 905,50</text><text transform="translate(1748.9 824.2) rotate(-90)" font-size="14.3" textLength="61.2" lengthAdjust="spacingAndGlyphs">3 041,33</text><text transform="translate(1819.3 824.2) rotate(-90)" font-size="14.3" textLength="30.3" lengthAdjust="spacingAndGlyphs">0,00</text><text transform="translate(1847.9 824.2) rotate(-90)" font-size="14.3" textLength="30.3" lengthAdjust="spacingAndGlyphs">0,00</text></svg>
</body></html>
